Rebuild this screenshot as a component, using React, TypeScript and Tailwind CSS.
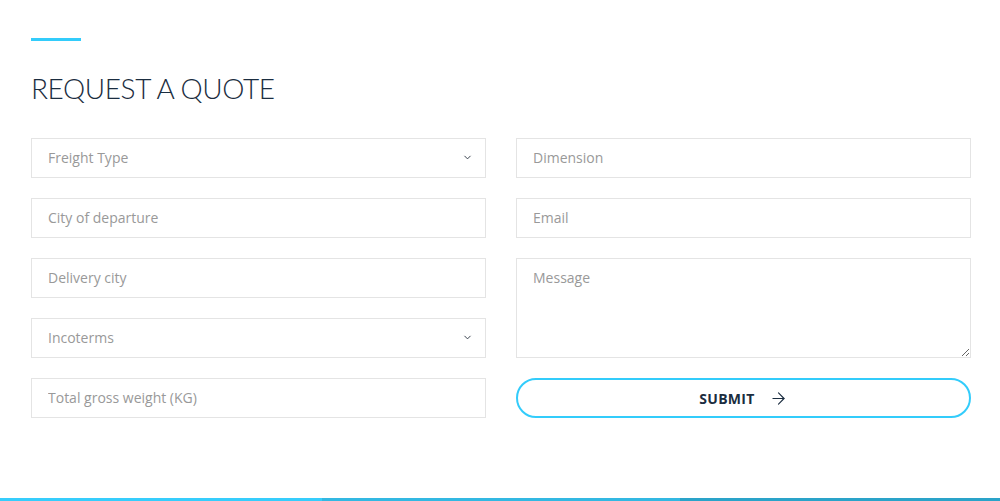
import { ChevronDown, ArrowRight } from 'lucide-react'

const field =
    "h-10 w-full border border-[#e4e4e4] bg-white px-4 pb-[2px] text-[14px] text-[#999] placeholder:text-[#999] outline-none font-['Open_Sans',sans-serif]"

function SelectField({ label }: { label: string }) {
    return (
        <div className="relative">
            <select className={field + " appearance-none"} defaultValue="">
                <option value="" disabled>{label}</option>
            </select>
            <ChevronDown className="pointer-events-none absolute right-[13px] top-[14px] h-[11px] w-[11px] text-[#2a3340]" strokeWidth={2} />
        </div>
    )
}

export default function App() {
    return (
        <div className="min-h-[501px] bg-white flex flex-col">
            <div className="ml-[31px] w-[940px] pt-[38px] pb-[80px]">
                {/* accent */}
                <div className="h-[3px] w-[50px] bg-[#33ccfb]" />

                <h1 className="mt-[29px] text-[28px] leading-[36px] font-light tracking-[-0.4px] text-[#1b2d40] font-['Lato',sans-serif]">
                    REQUEST A QUOTE
                </h1>

                <form className="mt-[32px] grid grid-cols-2 gap-x-[30px]">
                    <div className="flex flex-col gap-5">
                        <SelectField label="Freight Type" />
                        <input className={field} placeholder="City of departure" />
                        <input className={field} placeholder="Delivery city" />
                        <SelectField label="Incoterms" />
                        <input className={field} placeholder="Total gross weight (KG)" />
                    </div>
                    <div className="flex flex-col gap-5">
                        <input className={field} placeholder="Dimension" />
                        <input className={field} placeholder="Email" />
                        <textarea
                            className="block h-[100px] w-full border border-[#e4e4e4] bg-white px-4 py-[8px] text-[14px] text-[#999] placeholder:text-[#999] outline-none font-['Open_Sans',sans-serif]"
                            placeholder="Message"
                        />
                        <button
                            type="button"
                            className="h-10 w-full rounded-full border-2 border-[#33ccfb] bg-white flex items-center justify-center gap-[14px] text-[14px] font-bold tracking-[0.3px] text-[#1b2d40] font-['Open_Sans',sans-serif]"
                        >
                            SUBMIT
                            <ArrowRight className="h-[19px] w-[19px]" strokeWidth={1.4} />
                        </button>
                    </div>
                </form>
            </div>

            {/* bottom bar */}
            <div className="mt-auto flex h-[3px]">
                <div className="w-[322px] bg-[#36cdfc]" />
                <div className="w-[358px] bg-[#33b8e2]" />
                <div className="flex-1 bg-[#2aa3c9]" />
            </div>
        </div>
    )
}
